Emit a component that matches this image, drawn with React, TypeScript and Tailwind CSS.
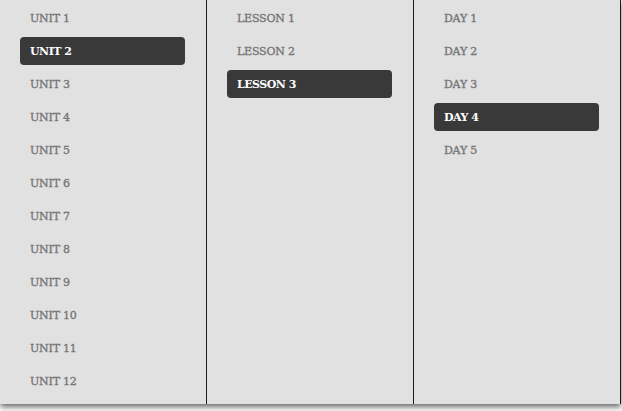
const units = Array.from({ length: 12 }, (_, i) => `UNIT ${i + 1}`);
const lessons = ["LESSON 1", "LESSON 2", "LESSON 3"];
const days = ["DAY 1", "DAY 2", "DAY 3", "DAY 4", "DAY 5"];

interface ColumnProps {
  items: string[];
  active: number;
}

function Column({ items, active }: ColumnProps) {
  return (
    <div className="w-[207px] h-full border-r-[1.5px] border-[#1e1e1e] pl-5 pr-[21px] pt-px">
      {items.map((label, i) => (
        <div key={label} className="h-[33px] flex items-center">
          <div
            className={`w-full h-[28px] flex items-center px-[10px] pt-[3px] rounded-[4px] text-[11px] ${
              i === active
                ? "bg-[#393939] text-white font-bold tracking-[-0.5px]"
                : "text-[#767676] font-normal tracking-[-0.2px] [-webkit-text-stroke:0.35px_#767676]"
            }`}
          >
            {label}
          </div>
        </div>
      ))}
    </div>
  );
}

export default function App() {
  return (
    <div
      className="w-[622px] h-[411px] bg-white overflow-hidden"
      style={{ fontFamily: '"DejaVu Serif", serif' }}
    >
      <div className="w-[621px] h-[404px] bg-[#e1e1e1] flex shadow-[0_3px_6px_rgba(0,0,0,0.6)]">
        <Column items={units} active={1} />
        <Column items={lessons} active={2} />
        <Column items={days} active={3} />
      </div>
    </div>
  );
}
